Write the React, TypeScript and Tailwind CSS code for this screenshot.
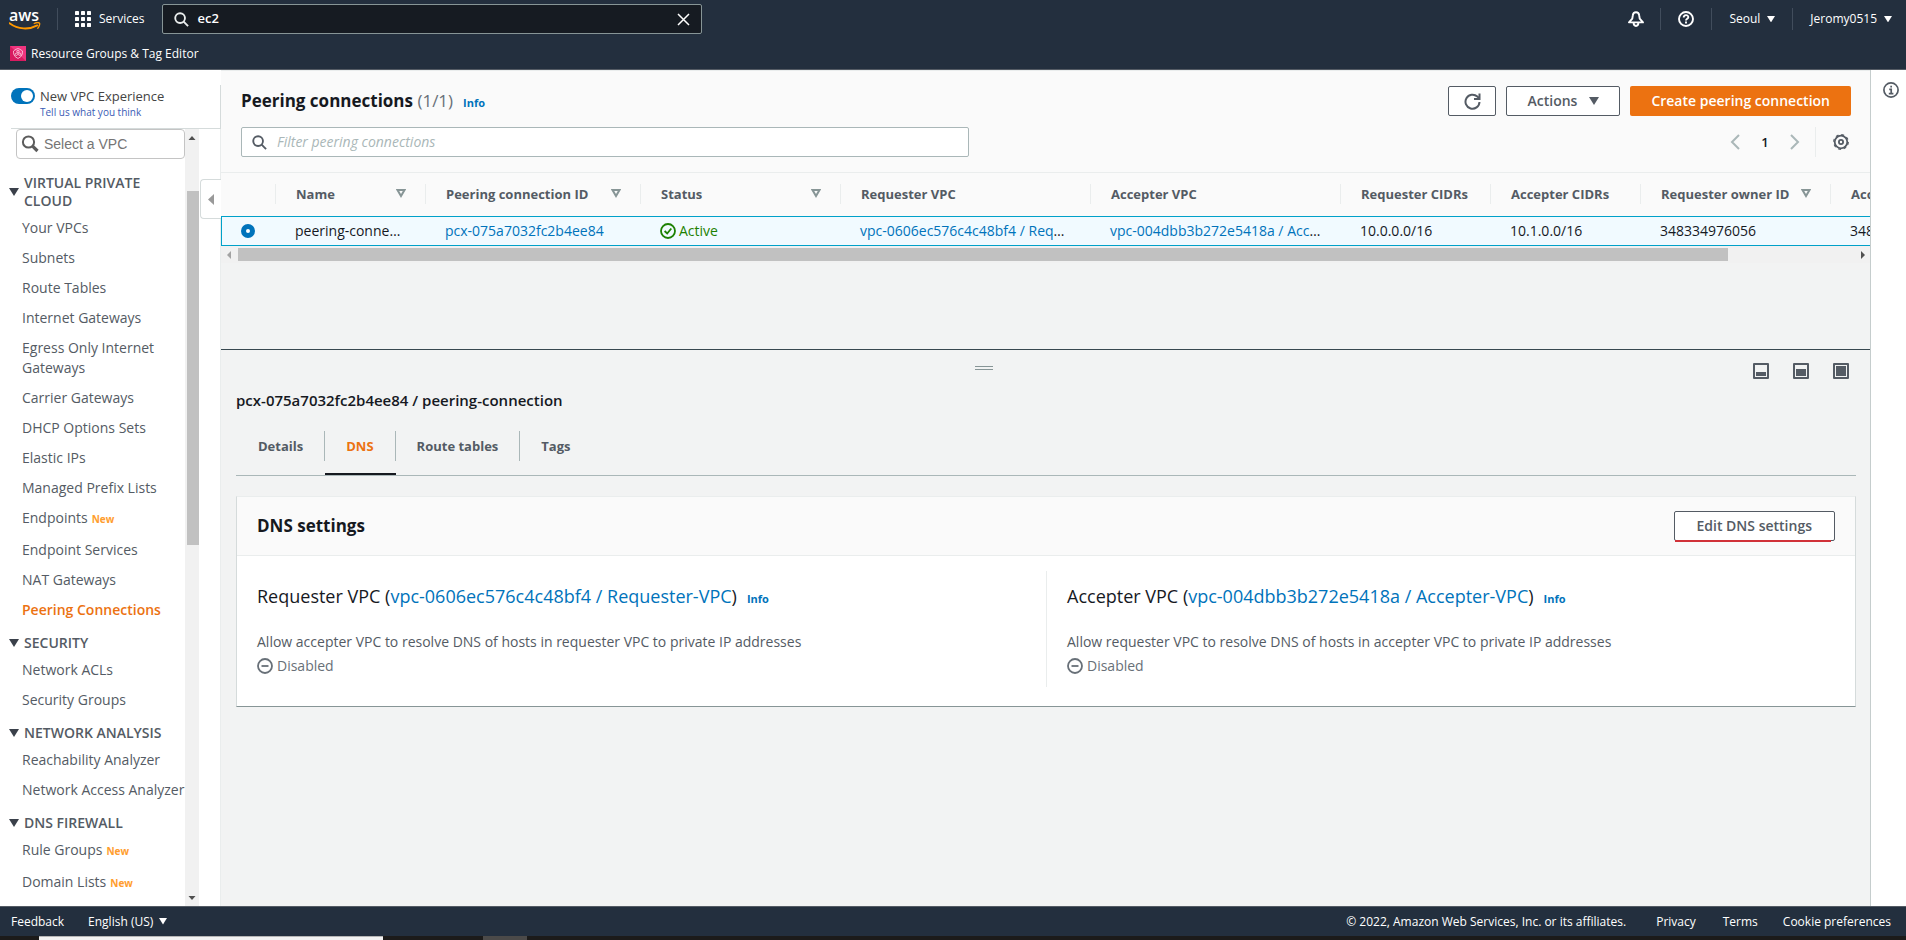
import { useState } from "react";
import type { ReactNode } from "react";

interface NavItem {
  label: string;
  isNew?: boolean;
}

interface NavSection {
  title: string;
  items: NavItem[];
}

const NAV_SECTIONS: NavSection[] = [
  {
    title: "VIRTUAL PRIVATE CLOUD",
    items: [
      { label: "Your VPCs" },
      { label: "Subnets" },
      { label: "Route Tables" },
      { label: "Internet Gateways" },
      { label: "Egress Only Internet Gateways" },
      { label: "Carrier Gateways" },
      { label: "DHCP Options Sets" },
      { label: "Elastic IPs" },
      { label: "Managed Prefix Lists" },
      { label: "Endpoints", isNew: true },
      { label: "Endpoint Services" },
      { label: "NAT Gateways" },
      { label: "Peering Connections" },
    ],
  },
  {
    title: "SECURITY",
    items: [{ label: "Network ACLs" }, { label: "Security Groups" }],
  },
  {
    title: "NETWORK ANALYSIS",
    items: [
      { label: "Reachability Analyzer" },
      { label: "Network Access Analyzer" },
    ],
  },
  {
    title: "DNS FIREWALL",
    items: [
      { label: "Rule Groups", isNew: true },
      { label: "Domain Lists", isNew: true },
    ],
  },
];

const COLUMNS = [
  { label: "Name", width: "w-[150px]", sortable: true },
  { label: "Peering connection ID", width: "w-[215px]", sortable: true },
  { label: "Status", width: "w-[200px]", sortable: true },
  { label: "Requester VPC", width: "w-[250px]", sortable: false },
  { label: "Accepter VPC", width: "w-[250px]", sortable: false },
  { label: "Requester CIDRs", width: "w-[150px]", sortable: false },
  { label: "Accepter CIDRs", width: "w-[150px]", sortable: false },
  { label: "Requester owner ID", width: "w-[190px]", sortable: true },
  { label: "Accepter owner ID", width: "w-[190px]", sortable: true },
];

const TABS = ["Details", "DNS", "Route tables", "Tags"];

export default function App() {
  return (
    <div className="flex h-screen flex-col overflow-hidden bg-white font-['Open_Sans','Noto_Sans',sans-serif] text-sm leading-5 text-[#16191f]">
      <TopBar />
      <div className="flex min-h-0 flex-1">
        <Sidebar />
        <main className="flex min-w-0 flex-1 flex-col bg-[#f2f3f3]">
          <PeeringTable />
          <DetailPanel />
        </main>
        <aside className="w-9 shrink-0 border-l border-[#c5cdcd] bg-white pt-3 pl-3">
          <button type="button" aria-label="Info panel" className="block">
            <InfoIcon />
          </button>
        </aside>
      </div>
      <Footer />
    </div>
  );
}

function TopBar() {
  const [query, setQuery] = useState("ec2");

  return (
    <header className="shrink-0 border-b border-[#545b64] bg-[#232f3e] text-xs font-medium text-white">
      <div className="flex h-[38px] items-center">
        <a href="#home" aria-label="AWS home" className="flex w-[57px] flex-col pl-[9px]">
          <span className="text-base leading-[14px] font-semibold">aws</span>
          <svg width="32" height="9" viewBox="0 0 32 9" fill="none">
            <path d="M0.5 1.2C9 7.6 20 8 28.3 3.4" stroke="#f90" strokeWidth="1.9" strokeLinecap="round" />
            <path d="M25.2 1.5C27 0.6 29.8 0.6 30.5 1.1C31.1 1.8 30.3 4.7 28.8 6.2" stroke="#f90" strokeWidth="1.3" strokeLinecap="round" />
          </svg>
        </a>
        <div className="h-[22px] w-px bg-[#414d5c]" />
        <button type="button" className="flex items-center gap-2 pr-[18px] pl-[17px]">
          <GridIcon />
          <span>Services</span>
        </button>
        <div className="flex h-[30px] w-[540px] items-center rounded-xs border border-[#879596] bg-[#161b22] px-[11px]">
          <SearchIcon className="size-[15px] text-[#eaeded]" />
          <input
            type="text"
            aria-label="Search"
            value={query}
            onChange={(e) => setQuery(e.target.value)}
            className="ml-2 min-w-0 flex-1 bg-transparent text-[13px] font-semibold outline-none"
          />
          <button type="button" aria-label="Clear search" onClick={() => setQuery("")}>
            <svg width="13" height="13" viewBox="0 0 13 13" fill="none" stroke="#fff" strokeWidth="1.5">
              <path d="M1 1L12 12M12 1L1 12" />
            </svg>
          </button>
        </div>
        <div className="ml-auto flex items-center">
          <button type="button" aria-label="Notifications" className="px-4">
            <BellIcon />
          </button>
          <div className="h-[22px] w-px bg-[#414d5c]" />
          <button type="button" aria-label="Help" className="px-[17px]">
            <HelpIcon />
          </button>
          <div className="h-[22px] w-px bg-[#414d5c]" />
          <button type="button" className="flex items-center gap-[7px] px-[17px]">
            Seoul <Caret className="w-2" />
          </button>
          <div className="h-[22px] w-px bg-[#414d5c]" />
          <button type="button" className="flex items-center gap-[7px] pr-[14px] pl-[17px]">
            Jeromy0515 <Caret className="w-2" />
          </button>
        </div>
      </div>
      <div className="flex h-[31px] items-center pl-[10px]">
        <a href="#resource-groups" className="flex items-center gap-[5px]">
          <ResourceGroupsIcon />
          Resource Groups &amp; Tag Editor
        </a>
      </div>
    </header>
  );
}

function Sidebar() {
  const [newExperience, setNewExperience] = useState(true);

  return (
    <aside className="relative flex w-[221px] shrink-0 flex-col bg-white pt-[15px] text-[#545b64]">
      <div className="ml-[11px] flex h-11 shrink-0 border-r border-b border-[#d5dbdb] pt-[3px]">
        <label className="flex items-start">
          <input
            type="checkbox"
            role="switch"
            aria-label="New VPC Experience"
            checked={newExperience}
            onChange={(e) => setNewExperience(e.target.checked)}
            className="peer sr-only"
          />
          <span className="flex h-4 w-6 justify-start rounded-full bg-[#879596] p-0.5 peer-checked:justify-end peer-checked:bg-[#0073bb]">
            <span className="size-3 rounded-full bg-white" />
          </span>
        </label>
        <div className="ml-[5px]">
          <div className="text-[13px] leading-4 text-[#444]">New VPC Experience</div>
          <a href="#feedback" className="block text-[10px] leading-4 text-[#3b5bb5]">
            Tell us what you think
          </a>
        </div>
      </div>
      <div className="flex min-h-0 flex-1">
        <nav className="w-[185px] shrink-0 overflow-hidden">
          <div className="ml-4 flex h-[30px] items-center rounded border border-[#c4c4c4] pl-1">
            <svg width="18" height="18" viewBox="0 0 18 18" fill="none" stroke="#5c5c5c">
              <circle cx="7.5" cy="7" r="5.6" strokeWidth="2" />
              <path d="M11.8 11.3L16.5 16" strokeWidth="3.2" />
            </svg>
            <input
              type="text"
              aria-label="Select a VPC"
              placeholder="Select a VPC"
              className="ml-[5px] w-32 bg-transparent font-['Liberation_Sans',sans-serif] text-sm outline-none placeholder:text-[#757575]"
            />
          </div>
          {NAV_SECTIONS.map((section) => (
            <NavGroup key={section.title} section={section} />
          ))}
        </nav>
        <div className="flex w-[14px] flex-col items-center justify-between bg-[#f1f1f1]">
          <svg width="8" height="18" viewBox="0 0 8 18" className="shrink-0">
            <path d="M0.5 11L4 7L7.5 11Z" fill="#505050" />
          </svg>
          <div className="mt-11 mb-auto ml-0.5 h-[354px] w-3 bg-[#c1c1c1]" />
          <svg width="8" height="17" viewBox="0 0 8 17" className="shrink-0">
            <path d="M0.5 7L4 11L7.5 7Z" fill="#505050" />
          </svg>
        </div>
        <div className="flex-1 border-r border-[#eaeded]" />
      </div>
      <button
        type="button"
        aria-label="Collapse navigation"
        className="absolute top-[109px] right-0 flex h-10 w-[21px] items-center justify-center rounded-l border border-r-0 border-[#d5dbdb] bg-white"
      >
        <svg width="6" height="11" viewBox="0 0 6 11">
          <path d="M6 0V11L0 5.5Z" fill="#999" />
        </svg>
      </button>
    </aside>
  );
}

function NavGroup({ section }: { section: NavSection }) {
  return (
    <section className="pt-[14px] first-of-type:pt-[15px]">
      <h3 className="flex items-center pb-2 pl-2 leading-[18px] font-semibold">
        <svg width="12" height="8" viewBox="0 0 12 8" className="mr-1 shrink-0">
          <path d="M1 0H11L6 8Z" fill="#3a404a" />
        </svg>
        <span className="max-w-[150px]">{section.title}</span>
      </h3>
      <ul className="flex w-[190px] flex-col gap-[10px] pl-[22px]">
        {section.items.map((item) => {
          const active = item.label === "Peering Connections";
          return (
            <li key={item.label} className={item.isNew ? "h-[22px]" : undefined}>
              <a
                href="#nav"
                aria-current={active ? "page" : undefined}
                className={active ? "font-semibold text-[#ec7211]" : undefined}
              >
                {item.label}
              </a>
              {item.isNew && (
                <span className="ml-1 text-[10px] font-bold text-[#ff9d2e]">New</span>
              )}
            </li>
          );
        })}
      </ul>
    </section>
  );
}

function PeeringTable() {
  const [filter, setFilter] = useState("");

  return (
    <section className="flex h-[279px] shrink-0 flex-col">
      <div className="border-t border-[#eaeded] bg-[#fafafa]">
        <div className="flex items-center justify-between pt-[15px] pr-[19px] pl-5">
          <h1 className="pt-0.5 text-[17px] font-bold">
            Peering connections <span className="font-normal text-[#687078]">(1/1)</span>
            <a href="#info" className="ml-[10px] text-[11px] font-bold text-[#0073bb]">
              Info
            </a>
          </h1>
          <div className="flex gap-[10px]">
            <Button label="Refresh" className="w-12 px-0">
              <RefreshIcon />
            </Button>
            <Button className="px-5">
              Actions <Caret className="ml-3 w-[10px]" />
            </Button>
            <button
              type="button"
              className="h-[30px] rounded-xs bg-[#ec7211] px-[21px] font-semibold text-white"
            >
              Create peering connection
            </button>
          </div>
        </div>
        <div className="flex items-center justify-between pt-[11px] pr-[21px] pb-[15px] pl-5">
          <div className="flex h-[30px] w-[728px] items-center rounded-xs border border-[#aab7b8] bg-white pl-[10px]">
            <SearchIcon className="size-[15px] text-[#545b64]" />
            <input
              type="text"
              aria-label="Filter peering connections"
              placeholder="Filter peering connections"
              value={filter}
              onChange={(e) => setFilter(e.target.value)}
              className="ml-[10px] min-w-0 flex-1 bg-transparent outline-none placeholder:text-[#aab7b8] placeholder:italic"
            />
          </div>
          <div className="flex h-[30px] items-center">
            <button type="button" aria-label="Previous page">
              <svg width="10" height="16" viewBox="0 0 10 16" fill="none" stroke="#aab7b8" strokeWidth="2">
                <path d="M9 1L2 8L9 15" />
              </svg>
            </button>
            <button type="button" className="w-[50px] text-center text-[13px] font-semibold">
              1
            </button>
            <button type="button" aria-label="Next page">
              <svg width="10" height="16" viewBox="0 0 10 16" fill="none" stroke="#aab7b8" strokeWidth="2">
                <path d="M1 1L8 8L1 15" />
              </svg>
            </button>
            <div className="mr-[17px] ml-[15px] h-full w-px bg-[#eaeded]" />
            <button type="button" aria-label="Preferences">
              <GearIcon />
            </button>
          </div>
        </div>
      </div>
      <div className="overflow-hidden">
        <table className="w-[1800px] table-fixed border-separate border-spacing-0 text-left whitespace-nowrap">
          <thead>
            <tr className="h-11 bg-[#fafafa] text-[13px] text-[#545b64]">
              <th className="w-[55px] border-t border-[#eaeded] p-0 pb-0.5">
                <div className="h-5 border-r border-[#eaeded]" />
              </th>
              {COLUMNS.map((column) => (
                <th key={column.label} className={`border-t border-[#eaeded] p-0 pb-0.5 font-bold ${column.width}`}>
                  <div className="flex h-5 items-center justify-between border-r border-[#eaeded] pr-[19px] pl-5">
                    {column.label}
                    {column.sortable && <SortIcon />}
                  </div>
                </th>
              ))}
            </tr>
          </thead>
          <tbody>
            <tr className="h-[30px] bg-[#f1faff]">
              <td className="border-y border-l border-[#00a1c9] p-0 pl-[19px]">
                <input
                  type="radio"
                  name="peering"
                  aria-label="peering-connection"
                  defaultChecked
                  className="block size-[14px] appearance-none rounded-full border border-[#879596] bg-white checked:border-[5px] checked:border-[#0073bb]"
                />
              </td>
              <Cell>peering-connection</Cell>
              <Cell>
                <a href="#pcx" className="text-[#0073bb]">pcx-075a7032fc2b4ee84</a>
              </Cell>
              <Cell>
                <span className="flex items-center gap-[3px] text-[#1d8102]">
                  <CheckIcon /> Active
                </span>
              </Cell>
              <Cell>
                <a href="#requester" className="text-[#0073bb]">
                  vpc-0606ec576c4c48bf4 / Requester-VPC
                </a>
              </Cell>
              <Cell>
                <a href="#accepter" className="text-[#0073bb]">
                  vpc-004dbb3b272e5418a / Accepter-VPC
                </a>
              </Cell>
              <Cell>10.0.0.0/16</Cell>
              <Cell>10.1.0.0/16</Cell>
              <Cell>348334976056</Cell>
              <Cell>348334976056</Cell>
            </tr>
          </tbody>
        </table>
      </div>
      <div className="flex h-[17px] items-center bg-[#f1f1f1]">
        <svg width="17" height="10" viewBox="0 0 17 10" className="shrink-0">
          <path d="M10 1V9L6 5Z" fill="#a3a3a3" />
        </svg>
        <div className="flex-1">
          <div className="h-[13px] w-[92%] bg-[#c1c1c1]" />
        </div>
        <svg width="12" height="10" viewBox="0 0 12 10" className="shrink-0">
          <path d="M3 1V9L7 5Z" fill="#505050" />
        </svg>
      </div>
    </section>
  );
}

function Cell({ children }: { children: ReactNode }) {
  return <td className="truncate border-y border-[#00a1c9] p-0 pr-5 pl-[19px]">{children}</td>;
}

function DetailPanel() {
  const [activeTab, setActiveTab] = useState("DNS");

  return (
    <section className="flex-1 border-t border-[#37474f] pr-[14px] pl-[15px]">
      <div className="flex items-start pt-[13px]">
        <div className="flex flex-1 justify-center">
          <button type="button" aria-label="Resize panel" className="mt-[3px] h-1 w-[18px] border-y border-[#879596]" />
        </div>
        <div className="flex shrink-0 gap-6 pr-[7px] pl-[21px]">
          <PanelSizeButton label="Small panel" fill="h-1" />
          <PanelSizeButton label="Half panel" fill="h-[7px]" />
          <PanelSizeButton label="Full panel" fill="h-[10px]" />
        </div>
      </div>
      <h2 className="mt-[11px] text-[15px] font-semibold">pcx-075a7032fc2b4ee84 / peering-connection</h2>
      <div role="tablist" className="mt-[21px] flex h-[45px] border-b border-[#aab7b8] pl-px">
        {TABS.map((tab) => {
          const active = tab === activeTab;
          return (
            <button
              key={tab}
              type="button"
              role="tab"
              aria-selected={active}
              onClick={() => setActiveTab(tab)}
              className={`flex flex-col border-b-2 text-[13px] font-bold ${
                active ? "border-[#16191f] text-[#ec7211]" : "border-transparent text-[#545b64]"
              }`}
            >
              <span
                className={`flex h-[30px] items-center px-[21px] ${
                  tab === "Tags" ? "" : "border-r border-[#aab7b8]"
                }`}
              >
                {tab}
              </span>
            </button>
          );
        })}
      </div>
      <div className="mt-5 border border-t-[#eaeded] border-r-[#d5dbdb] border-b-[#879596] border-l-[#d5dbdb] bg-white">
        <div className="flex h-[59px] items-center justify-between border-b border-[#eaeded] bg-[#fafafa] px-5">
          <h3 className="text-[17px] font-bold">DNS settings</h3>
          <div className="relative">
            <Button className="px-[22px]">Edit DNS settings</Button>
            <div className="absolute right-1 -bottom-px left-px h-0.5 bg-[#d13239]" />
          </div>
        </div>
        <div className="grid grid-cols-2 pt-[15px] pb-[19px]">
          <DnsColumn
            title="Requester VPC"
            link="vpc-0606ec576c4c48bf4 / Requester-VPC"
            description="Allow accepter VPC to resolve DNS of hosts in requester VPC to private IP addresses"
          />
          <div className="border-l border-[#eaeded]">
            <DnsColumn
              title="Accepter VPC"
              link="vpc-004dbb3b272e5418a / Accepter-VPC"
              description="Allow requester VPC to resolve DNS of hosts in accepter VPC to private IP addresses"
            />
          </div>
        </div>
      </div>
    </section>
  );
}

function DnsColumn({
  title,
  link,
  description,
}: {
  title: string;
  link: string;
  description: string;
}) {
  return (
    <div className="px-5 pt-[13px] pb-[11px]">
      <h4 className="text-lg leading-6">
        {title} (
        <a href="#vpc" className="text-[#0073bb]">{link}</a>)
        <a href="#info" className="ml-[10px] text-[11px] font-bold text-[#0073bb]">
          Info
        </a>
      </h4>
      <p className="mt-[21px] text-[#545b64]">{description}</p>
      <p className="mt-1 flex items-center gap-1 text-[#687078]">
        <svg width="16" height="16" viewBox="0 0 16 16" fill="none" stroke="currentColor" strokeWidth="1.8">
          <circle cx="8" cy="8" r="7" />
          <path d="M4.5 8H11.5" />
        </svg>
        Disabled
      </p>
    </div>
  );
}

function Footer() {
  return (
    <footer className="shrink-0 bg-[#1c1b1a]">
      <div className="flex h-[30px] items-center border-t border-[#545b64] bg-[#232f3e] pr-[15px] pl-[11px] text-xs font-medium text-white">
        <a href="#feedback">Feedback</a>
        <button type="button" className="ml-6 flex items-center gap-[6px]">
          English (US) <Caret className="w-2" />
        </button>
        <span className="ml-auto">© 2022, Amazon Web Services, Inc. or its affiliates.</span>
        <a href="#privacy" className="ml-[30px]">Privacy</a>
        <a href="#terms" className="ml-[27px]">Terms</a>
        <a href="#cookies" className="ml-[25px]">Cookie preferences</a>
      </div>
      <div className="flex h-1">
        <div className="ml-[39px] w-[344px] border-t border-[#b5b5b5] bg-[#f2f2f2]" />
        <div className="ml-[100px] w-11 bg-[#4b4a49]" />
      </div>
    </footer>
  );
}

function Button({
  children,
  label,
  className,
}: {
  children: ReactNode;
  label?: string;
  className: string;
}) {
  return (
    <button
      type="button"
      aria-label={label}
      className={`flex h-[30px] items-center justify-center rounded-xs border border-[#545b64] bg-white font-semibold text-[#545b64] ${className}`}
    >
      {children}
    </button>
  );
}

function PanelSizeButton({ label, fill }: { label: string; fill: string }) {
  return (
    <button
      type="button"
      aria-label={label}
      className="flex size-4 flex-col justify-end rounded-[1px] border-2 border-[#545b64] p-px"
    >
      <span className={`block w-full bg-[#545b64] ${fill}`} />
    </button>
  );
}

function Caret({ className }: { className: string }) {
  return (
    <svg viewBox="0 0 10 8" className={className} fill="currentColor">
      <path d="M0 0H10L5 8Z" />
    </svg>
  );
}

function SortIcon() {
  return (
    <svg width="10" height="9" viewBox="0 0 10 9" fill="none" stroke="#879596" strokeWidth="2">
      <path d="M1.5 1H8.5L5 7Z" />
    </svg>
  );
}

function SearchIcon({ className }: { className: string }) {
  return (
    <svg viewBox="0 0 16 16" className={`shrink-0 ${className}`} fill="none" stroke="currentColor" strokeWidth="2">
      <circle cx="6.5" cy="6.5" r="5.2" />
      <path d="M10.3 10.3L15 15" />
    </svg>
  );
}

function GridIcon() {
  return (
    <svg width="16" height="16" viewBox="0 0 16 16" fill="#fff">
      {[0, 6, 12].map((y) =>
        [0, 6, 12].map((x) => <rect key={`${x}-${y}`} x={x} y={y} width="4" height="4" rx="0.4" />),
      )}
    </svg>
  );
}

function BellIcon() {
  return (
    <svg width="16" height="16" viewBox="0 0 16 16" fill="none" stroke="#fff" strokeWidth="1.9" strokeLinejoin="round">
      <path d="M8 1.2C6.2 1.2 5 2.6 4.8 4.4L4.3 7.6L1 11.4H15L11.7 7.6L11.2 4.4C11 2.6 9.8 1.2 8 1.2Z" />
      <path d="M5.6 11.6C5.6 14 6.6 15 8 15S10.4 14 10.4 11.6" />
    </svg>
  );
}

function HelpIcon() {
  return (
    <svg width="16" height="16" viewBox="0 0 16 16" fill="none" stroke="#fff" strokeWidth="1.9">
      <circle cx="8" cy="8" r="7" />
      <path d="M5.7 6.5C5.7 3.4 10.3 3.4 10.3 6.2C10.3 7.8 8 7.8 8 9.6" />
      <path d="M8 10.6V12.4" />
    </svg>
  );
}

function InfoIcon() {
  return (
    <svg width="16" height="16" viewBox="0 0 16 16" fill="none" stroke="#545b64" strokeWidth="1.7">
      <circle cx="8" cy="8" r="7.1" />
      <path d="M6.2 7.3H8.2V11.3M5.8 11.6H10.4M7.3 4.7H9" />
    </svg>
  );
}

function RefreshIcon() {
  return (
    <svg width="17" height="17" viewBox="0 0 17 17" fill="none" stroke="currentColor" strokeWidth="2">
      <path d="M15.5 9A7 7 0 1 1 13.3 3.6L15.5 5.6" />
      <path d="M15.5 0.5V6H10" />
    </svg>
  );
}

function GearIcon() {
  return (
    <svg width="16" height="16" viewBox="0 0 16 16" fill="none" stroke="#545b64">
      <circle cx="8" cy="8" r="6.3" strokeWidth="1.8" />
      <circle cx="8" cy="8" r="7.3" strokeWidth="1.2" strokeDasharray="2.87 2.87" />
      <circle cx="8" cy="8" r="2.1" strokeWidth="1.8" />
    </svg>
  );
}

function CheckIcon() {
  return (
    <svg width="16" height="16" viewBox="0 0 16 16" fill="none" stroke="currentColor" strokeWidth="1.8">
      <circle cx="8" cy="8" r="7" />
      <path d="M4.6 8L7.2 10.5L11.3 5.5" />
    </svg>
  );
}

function ResourceGroupsIcon() {
  return (
    <svg width="16" height="15" viewBox="0 0 16 15" fill="none">
      <rect width="16" height="15" fill="#d81b60" />
      <path d="M16 0V15L0 0Z" fill="#f0357f" />
      <g stroke="#fbd3e2" strokeWidth="0.8">
        <path d="M8 2.5L10 3.3L12.5 5L12.3 8L11 10.5L8 12.5L5 10.5L3.7 8L3.5 5L6 3.3Z" />
        <circle cx="8" cy="5.6" r="1.2" />
        <circle cx="6.3" cy="8.3" r="1.2" />
        <circle cx="9.7" cy="8.3" r="1.2" />
      </g>
    </svg>
  );
}
